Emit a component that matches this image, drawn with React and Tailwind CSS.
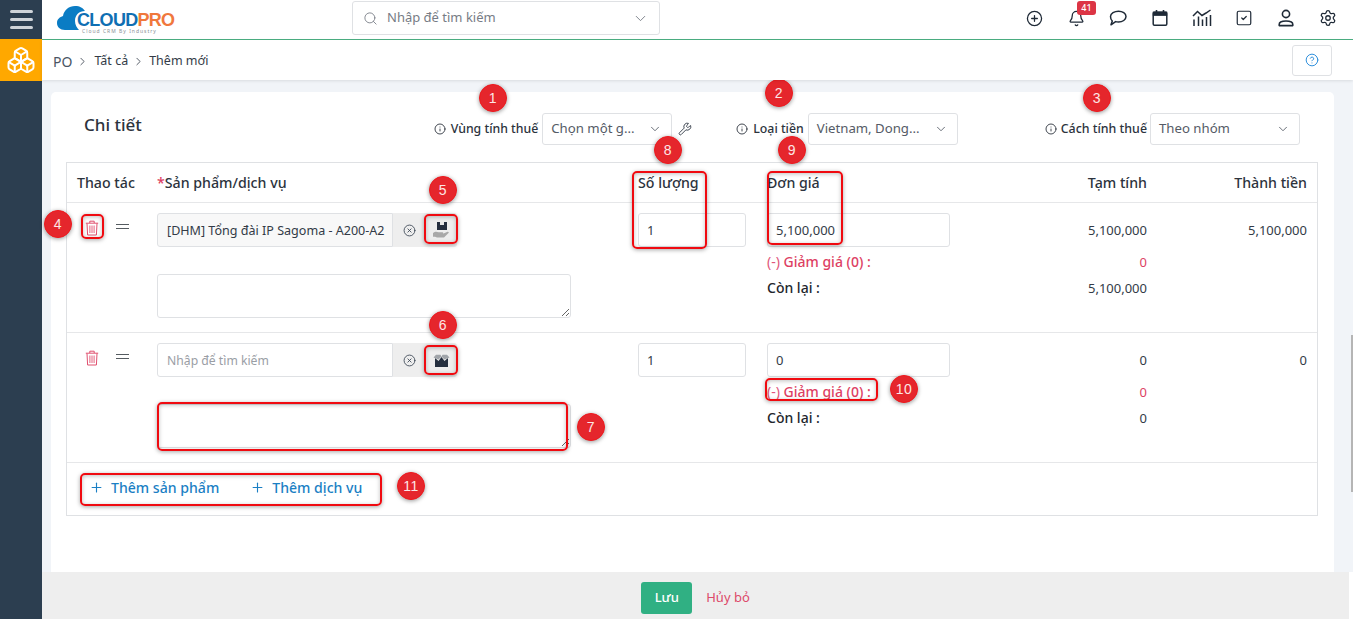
import React from 'react';
import {
  Boxes, Search, ChevronDown, ChevronRight, CirclePlus, Bell, SquareCheck, Settings,
  CircleHelp, Info, Wrench, CircleX, Plus,
} from 'lucide-react';

const font = { fontFamily: '"Noto Sans", sans-serif' };

function CalendarIcon() {
  return (
    <svg width="16" height="18" viewBox="0 0 16 18" fill="none" stroke="#1f2a37">
      <rect x="1.2" y="3.2" width="13.6" height="13" rx="1.2" strokeWidth="1.5" />
      <rect x="1.2" y="3" width="13.6" height="3.4" fill="#1f2a37" strokeWidth="0.8" />
      <path d="M4.5 1v3M11.5 1v3" strokeWidth="1.6" />
    </svg>
  );
}

function ChartIcon() {
  return (
    <svg width="20" height="18" viewBox="0 0 20 18" fill="none" stroke="#1f2a37" strokeWidth="1.5">
      <path d="M1 7l4.5-4.5L10 6.5l4-2.5 4.5-3" />
      <path d="M2 10.5V17M6.5 7.5V17M10.5 10.5V17M14.5 8V17M18.5 6V17" />
    </svg>
  );
}

function ChatIcon() {
  return (
    <svg width="18" height="16" viewBox="0 0 18 16" fill="none" stroke="#1f2a37" strokeWidth="1.5" strokeLinejoin="round">
      <path d="M9.5 1.2c4 0 7.5 2.2 7.5 5.4s-3.500 5.400-7.500 5.400c-1 0-2-.1-2.900-.4L2 14.800l1.300-3.700C2 10 1.500 8.500 1.500 6.600 1.500 3.400 5.500 1.200 9.500 1.200z" />
    </svg>
  );
}

function UserIcon() {
  return (
    <svg width="16" height="18" viewBox="0 0 16 18" fill="none" stroke="#1f2a37" strokeWidth="1.6">
      <circle cx="8" cy="5" r="3.6" />
      <path d="M1.2 16.600v-1.200c0-2.200 2.300-3.400 6.800-3.400s6.800 1.200 6.800 3.400v1.200z" strokeLinejoin="round" />
    </svg>
  );
}

function TrashIcon() {
  return (
    <svg width="14" height="16" viewBox="0 0 14 16" fill="none" stroke="#e0506f" strokeWidth="1" className="shrink-0">
      <path d="M.8 3.200h12.400M4.800 3V1.200h4.400V3" />
      <path d="M2 3.400l.6 11.600h8.800l.6-11.600" />
      <path d="M4.900 5.500v7.500M7 5.500v7.500M9.100 5.500v7.500" strokeWidth="0.9" />
    </svg>
  );
}

function OpenBoxIcon({ hand }) {
  if (hand) {
    return (
      <svg width="17" height="16" viewBox="0 0 17 16">
        <path d="M4 0h10v8H4z" fill="#252f3f" />
        <path d="M7 0h4v3H7z" fill="#e8e8e8" />
        <path d="M0 11c2-1.600 3.500-1.600 5.500-.8h4c1 0 1 1.400 0 1.400H7h3.500l4-1.800c1-.3 1.700.6 1 1.300L11 15.500H4l-2-.8H0z" fill="#a8a8a8" />
      </svg>
    );
  }
  return (
    <svg width="17" height="13" viewBox="0 0 17 13">
      <path d="M2 4L5.500 7 8.500 3 11.500 7 15 4V13H2z" fill="#252f3f" />
      <path d="M.5 3.500L3 .8h4.500L8.500 2.500 5.500 5.500zM16.500 3.500L14 .8H9.500L8.500 2.500 11.500 5.500z" fill="#a0a4a9" />
    </svg>
  );
}

function Field({ value, placeholder, className }) {
  return (
    <input
      readOnly
      value={value}
      placeholder={placeholder}
      className={`h-[34px] border border-[#dfe1e4] rounded-[3px] px-[8px] text-[13px] text-[#333b47] placeholder:text-[#9a9ea5] outline-none ${className}`}
    />
  );
}

function SelectBox({ label, width }) {
  return (
    <div className={`h-[32px] border border-[#dfe1e4] rounded-[3px] flex items-center justify-between px-[8px] text-[13.2px] text-[#555b66] bg-white ${width}`}>
      <span>{label}</span>
      <ChevronDown size={14} strokeWidth={1.5} className="text-[#555b66] mr-[1px]" />
    </div>
  );
}

function ProductRow({ product, boxHand, price, total }) {
  return (
    <div className="h-[130px] border-b border-[#e6e7e9] grid grid-cols-[90px_481px_129px_220px_160px_170px] pt-[10px]">
      <div className="flex items-start pt-[7px] pl-[18px] gap-[17px]">
        <TrashIcon />
        <div className="mt-[4px] w-[13px] h-[3px] box-content border-y-[1.5px] border-[#555b60]" />
      </div>
      <div>
        <div className="flex items-center">
          <Field
            {...product}
            className={`w-[236px] rounded-r-none !pl-[9px] !pr-0 !text-[12.55px] placeholder:!text-[12.2px] ${product.value ? 'bg-[#f8f8f8]' : 'bg-white'}`}
          />
          <div className="w-[32px] h-[34px] bg-[#eeeeee] flex items-center justify-center">
            <CircleX size={13} strokeWidth={1.6} className="text-[#3a4554]" />
          </div>
          <div className="w-[32px] h-[34px] flex items-center justify-center bg-[#eeeeee] rounded-r-[3px]">
            <OpenBoxIcon hand={boxHand} />
          </div>
        </div>
        <textarea readOnly className="block mt-[27px] w-[414px] h-[44px] border border-[#dfe1e4] rounded-[3px] bg-white outline-none" />
      </div>
      <div>
        <Field value="1" className="w-[108px] bg-white" />
      </div>
      <div className="text-[14px]">
        <Field value={price} className="w-[183px] bg-white" />
        <div className="mt-[3px] h-[25px] leading-[24px] font-medium text-[#dd3f63]"><span className="font-normal text-[#e0567a]">(-)</span> Giảm giá (0) :</div>
        <div className="h-[26px] leading-[26px] font-medium text-[#22262c]">Còn lại :</div>
      </div>
      <div className="text-right text-[13px] text-[#333b47]">
        <div className="h-[34px] leading-[34px]">{total}</div>
        <div className="mt-[3px] h-[25px] leading-[24px] text-[#dd3f63]">0</div>
        <div className="h-[26px] leading-[26px]">{total}</div>
      </div>
      <div className="text-right text-[13px] text-[#333b47] pr-[10px] h-[34px] leading-[34px]">{total}</div>
    </div>
  );
}

// numbered red markers and boxes drawn over the screenshot
const badges = [
  ['1', 493, 98], ['2', 779, 93], ['3', 1097, 98], ['4', 58, 224], ['5', 443, 190], ['6', 443, 325],
  ['7', 591, 427], ['8', 668, 150], ['9', 792, 150], ['10', 904, 389], ['11', 411, 486],
];
const boxes = [
  [81, 214, 23, 25], [424, 214, 34, 30], [424, 345, 34, 30], [157, 402, 411, 49],
  [632, 171, 75, 78], [767, 171, 76, 74], [765, 378, 113, 23], [80, 473, 302, 33],
];

function Annotations() {
  return (
    <>
      {boxes.map(([x, y, w, h]) => (
        <div
          key={`${x}-${y}`}
          className="absolute border-2 border-[#f00a10] rounded-[5px] shadow-[0_1px_4px_rgba(0,0,0,0.35),inset_0_1px_4px_rgba(0,0,0,0.25)]"
          style={{ left: x, top: y, width: w, height: h }}
        />
      ))}
      {badges.map(([n, x, y]) => (
        <div
          key={n}
          className="absolute w-[28px] h-[28px] -ml-[14px] -mt-[14px] rounded-full bg-[#e5262c] border border-[#f0171c] shadow-[0_1px_4px_rgba(0,0,0,0.4)] flex items-center justify-center text-[14px] tracking-[0.5px] leading-none text-[#fde6e6]"
          style={{ left: x, top: y, fontFamily: '"Liberation Sans", sans-serif' }}
        >
          {n}
        </div>
      ))}
    </>
  );
}

export default function App() {
  const topIcons = [
    <CirclePlus key="a" size={17} strokeWidth={1.8} />,
    <Bell key="b" size={17} strokeWidth={1.8} />,
    <ChatIcon key="c" />,
    <CalendarIcon key="d" />,
    <ChartIcon key="e" />,
    <SquareCheck key="f" size={18} strokeWidth={1.6} />,
    <UserIcon key="g" />,
    <Settings key="h" size={18} strokeWidth={1.7} />,
  ];

  return (
    <div className="relative w-[1353px] h-[619px] overflow-hidden flex bg-white text-[#333b47]" style={font}>
      <aside className="w-[42px] shrink-0 bg-[#2c3e50] flex flex-col">
        <div className="h-[39px] flex flex-col items-center justify-center gap-[5px]">
          <span className="w-[23px] h-[3px] rounded-sm bg-[#cfd4d9]" />
          <span className="w-[23px] h-[3px] rounded-sm bg-[#cfd4d9]" />
          <span className="w-[23px] h-[3px] rounded-sm bg-[#cfd4d9]" />
        </div>
        <div className="h-[42px] bg-[#ffa800] flex items-center justify-center">
          <Boxes size={30} strokeWidth={1.6} className="text-white" />
        </div>
      </aside>

      <div className="flex-1 flex flex-col min-w-0">
        <header className="h-[40px] shrink-0 border-b border-[#4caf83] flex items-center bg-white">
          <div className="w-[310px] pl-[15px] flex items-center -mt-[3px]">
            <svg width="38" height="26" viewBox="0 0 38 26" className="shrink-0">
              <path d="M8 25C3 25 0 22 0 18c0-4 3-6 6-7C7 5 12 1 18 1c5 0 8 2 10 5-6 0-10 4-10 10 0 4 2 7 4 9z" fill="#0a7cc4" />
            </svg>
            <div className="-ml-[18px] relative mt-[3px]">
              <div className="text-[18px] leading-[20px] font-bold tracking-[-0.7px]" style={{ fontFamily: '"Liberation Sans", sans-serif' }}>
                <span className="text-[#0f6fb3]">CLOUD</span><span className="text-[#f0783c]">PRO</span>
              </div>
              <div className="absolute left-[5px] top-[18px] text-[5px] leading-[6px] tracking-[1px] whitespace-nowrap text-[#8a8f96]">Cloud CRM By Industry</div>
            </div>
          </div>
          <div className="w-[308px] h-[34px] -mt-[3px] border border-[#dfe1e4] rounded-[3px] flex items-center px-[10px] text-[13px] text-[#777c85]">
            <Search size={15} strokeWidth={1.4} className="mr-[9px]" />
            <span className="flex-1">Nhập để tìm kiếm</span>
            <ChevronDown size={17} strokeWidth={1.3} />
          </div>
          <div className="ml-auto mr-[4px] -mt-[3px] flex items-center text-[#1f2a37]">
            {topIcons.map((icon, i) => (
              <div key={i} className="relative w-[42px] h-[24px] flex items-center justify-center">
                {icon}
                {i === 1 && (
                  <span className="absolute left-[22px] -top-[5px] w-[19px] h-[14px] rounded-[3px] bg-[#dc3545] text-white text-[9px] leading-[14px] text-center font-medium">41</span>
                )}
              </div>
            ))}
          </div>
        </header>

        <div className="h-[40px] shrink-0 flex items-center pl-[11px] pr-[21px] pt-[2px] bg-white shadow-[0_1px_3px_rgba(0,0,0,0.1)] z-10">
          <span className="text-[14px] text-[#4a5564]">PO</span>
          <ChevronRight size={13} strokeWidth={1.6} className="ml-[4px] mr-[5px] text-[#3d4652]" />
          <span className="text-[12.5px]">Tất cả</span>
          <ChevronRight size={13} strokeWidth={1.6} className="mx-[4px] text-[#3d4652]" />
          <span className="text-[12.5px]">Thêm mới</span>
          <div className="ml-auto w-[40px] h-[31px] -mt-[2px] border border-[#dfe1e4] rounded-[3px] flex items-center justify-center">
            <CircleHelp size={14} strokeWidth={1.7} className="text-[#2e8fdc]" />
          </div>
        </div>

        <main className="flex-1 min-h-0 bg-[#f1f4f8] pl-[9px] pr-[19px] pt-[12px] flex flex-col">
          <section className="flex-1 bg-white rounded-t-[5px] pl-[15px] pr-[16px] pt-[13px] min-h-0">
            <div className="h-[57px] flex items-start">
              <h2 className="pl-[18px] text-[17px] font-medium text-[#2c333d] mt-[7px]">Chi tiết</h2>
              <div className="ml-auto flex items-center pr-[18px] mt-[8px]">
                <div className="flex items-center gap-[5px] text-[12.3px] font-medium text-[#2c333d]">
                  <Info size={12} strokeWidth={1.8} /> Vùng tính thuế
                </div>
                <div className="ml-[4px]"><SelectBox label="Chọn một g..." width="w-[130px]" /></div>
                <Wrench size={14} strokeWidth={1.6} className="ml-[6px] text-[#333b47]" />
                <div className="ml-[44px] flex items-center gap-[5px] text-[12.3px] font-medium text-[#2c333d]">
                  <Info size={12} strokeWidth={1.8} /> Loại tiền
                </div>
                <div className="ml-[4px]"><SelectBox label="Vietnam, Dong..." width="w-[150px]" /></div>
                <div className="ml-[87px] flex items-center gap-[4px] text-[12.4px] font-medium text-[#2c333d]">
                  <Info size={12} strokeWidth={1.8} /> Cách tính thuế
                </div>
                <div className="ml-[3px]"><SelectBox label="Theo nhóm" width="w-[150px]" /></div>
              </div>
            </div>

            <div className="border border-[#dfe1e4] w-[1252px]">
              <div className="h-[40px] border-b border-[#e6e7e9] grid grid-cols-[90px_481px_129px_220px_160px_170px] items-center pt-[1px] text-[14.2px] font-medium text-[#2c333d]">
                <div className="pl-[10px]">Thao tác</div>
                <div><span className="text-[#dd3f63]">*</span>Sản phẩm/dịch vụ</div>
                <div>Số lượng</div>
                <div>Đơn giá</div>
                <div className="text-right">Tạm tính</div>
                <div className="text-right pr-[10px]">Thành tiền</div>
              </div>
              <ProductRow product={{ value: '[DHM] Tổng đài IP Sagoma - A200-A2' }} boxHand price="5,100,000" total="5,100,000" />
              <ProductRow product={{ placeholder: 'Nhập để tìm kiếm' }} price="0" total="0" />
              <div className="h-[52px] flex items-center pl-[22px] pb-[2px] gap-[31px] text-[14.1px] font-medium text-[#1b7fc4]">
                <div className="flex items-center gap-[7px]"><Plus size={15} strokeWidth={1.8} className="text-[#1b7fc4]" /> Thêm sản phẩm</div>
                <div className="flex items-center gap-[7px]"><Plus size={15} strokeWidth={1.8} className="text-[#1b7fc4]" /> Thêm dịch vụ</div>
              </div>
            </div>
          </section>
        </main>

        <footer className="h-[47px] shrink-0 bg-[#eeeeee] mr-[4px] pt-[4px] flex items-center justify-center gap-[14px]">
          <button className="w-[51px] h-[32px] rounded-[3px] bg-[#30b083] text-white text-[13px] font-medium">Lưu</button>
          <span className="text-[13px] text-[#dd4a6a]">Hủy bỏ</span>
        </footer>
      </div>

      <div className="absolute right-0 top-[335px] w-[2px] h-[157px] bg-[#b5b5b5]" />
      <Annotations />
    </div>
  );
}
